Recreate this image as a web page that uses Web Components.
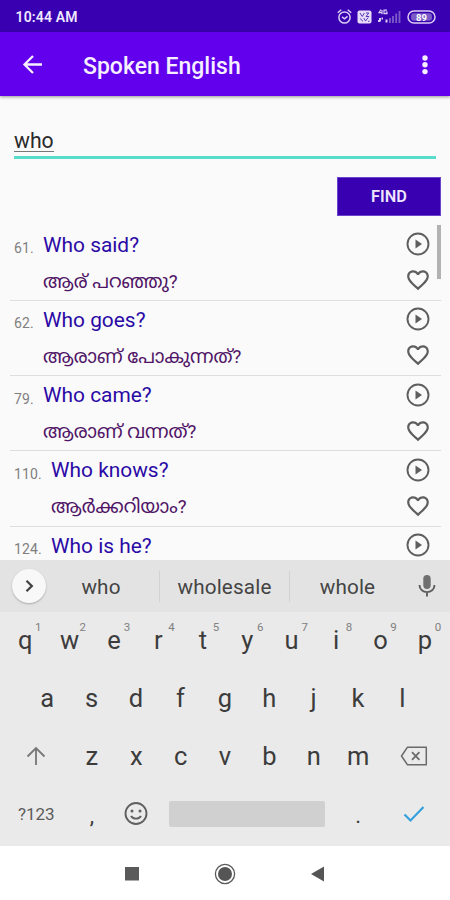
<!DOCTYPE html>
<html lang="en">
<head>
<meta charset="utf-8">
<title>Spoken English</title>
<style>
html,body{margin:0;padding:0;background:#fff}
body{width:450px;height:900px;overflow:hidden;font-family:Roboto,"Noto Sans Malayalam","Noto Sans",sans-serif}
</style>
</head>
<body>
<phone-screen></phone-screen>
<script>
function define(name, html){
  customElements.define(name, class extends HTMLElement{
    constructor(){
      super();
      const t=document.createElement('template');
      t.innerHTML=typeof html==='function'?html(this):html;
      this.attachShadow({mode:'open'}).appendChild(t.content.cloneNode(true));
    }
  });
}

define('status-bar', `<style>
:host{display:flex;height:32px;background:#3900b1;color:#efe8ff;align-items:center;justify-content:space-between;box-sizing:border-box;padding:1px 14px 0 15.500px}
.t{font-size:14px;font-weight:600;letter-spacing:.15px}
.i{display:flex;align-items:center}
svg{display:block}
</style>
<span class="t">10:44 AM</span>
<div class="i">
<svg width="100" height="18" viewBox="336 8 100 18" fill="none" stroke="#d9ccf5" stroke-width="1.5">
<circle cx="344.500" cy="17.500" r="5.600"/><path d="M337.800 12.800l3.500-3M351.200 12.800l-3.500-3M342 16.800l2.500 2 3-2.500"/>
<rect x="357.500" y="10.500" width="14" height="13" rx="2" fill="#e6dcfa" stroke="none"/>
<path d="M360 13l2.200 3.500 2.200-3.500M366 13h2.800l-2.800 3.500h3.200M360 18.500l3 2.800M363.800 18l1.700 3 2.700-3.500M368 21.300h1.500" stroke="#5a36b8" stroke-width="1"/>
<path d="M381 9.500l-2 3.200h3.500M382 10v4.200M387 10.200h-3v3.500h3v-1.700h-1.500" stroke-width="1.200"/>
<path d="M380 18v3.500M378 21h2M381.500 18.500h1.500M386.500 19.500v3" stroke-width="2"/>
<path d="M390 18v5M393 16v7M396.200 13.500v9.500M399.500 11v12" stroke="#7d5cc9" stroke-width="1.800"/>
<rect x="408" y="11" width="27" height="12" rx="6" stroke-width="1.500"/>
<rect x="411" y="13.200" width="21" height="7.600" rx="3" fill="#7a5bc8" stroke="none"/>
<text x="421.500" y="20.500" text-anchor="middle" font-family="Roboto,sans-serif" font-size="9.500" font-weight="700" fill="#fff" stroke="none">89</text>
</svg></div>`);

define('app-bar', `<style>
:host{display:flex;height:64px;background:#6200ee;color:#f5efff;align-items:center;box-sizing:border-box;padding:1px 20px 0 20px;box-shadow:0 1px 3px rgba(0,0,0,.4);position:relative;z-index:1}
h1{margin:0 0 0 37px;font-size:23px;font-weight:500;flex:1;line-height:28px;padding-top:5px;white-space:nowrap}
svg{display:block}
</style>
<svg width="26" height="26" viewBox="0 0 26 26" fill="none" stroke="currentColor" stroke-width="2.300"><path d="M22 12.500H4.500M13 4L4.500 12.500 13 21"/></svg>
<h1><slot></slot></h1>
<svg width="10" height="24" viewBox="0 0 10 24" fill="currentColor"><circle cx="5" cy="5" r="2.700"/><circle cx="5" cy="11.800" r="2.700"/><circle cx="5" cy="18.600" r="2.700"/></svg>`);

define('search-form', `<style>
:host{display:block;height:129px;box-sizing:border-box;padding:32px 9px 0 14px}
.f{height:31px;margin-right:5px;border-bottom:3px solid #58dccb;font-size:21.200px;line-height:26px;color:#2a2a2a;box-sizing:border-box}
.f span{border-bottom:1px solid #777;display:inline-block;line-height:22px;height:22px;box-sizing:border-box}
.b{display:flex;justify-content:flex-end;padding-top:18px}
button{all:unset;box-sizing:border-box;width:104px;height:39px;background:#3900b1;color:#eee6ff;border:1px solid #6a45cc;font:600 16.300px Roboto,sans-serif;text-align:center}
</style>
<div class="f"><span>who</span></div>
<div class="b"><button>FIND</button></div>`);

define('phrase-item', `<style>
:host{display:flex;height:75.300px;box-sizing:border-box;border-bottom:1.500px solid #dedede;margin:0 9px 0 10px;padding:0 10px 0 4px}
.n{font-size:14px;color:#7f7f7f;padding-top:14.500px;line-height:17px;letter-spacing:.1px;width:var(--nw,29px);white-space:nowrap}
.x{flex:1}
.e{font-size:20.900px;line-height:26px;padding-top:6px;color:#2b0aa6;white-space:nowrap}
.m{font-size:18.700px;line-height:24px;padding-top:12px;color:#4f1466;white-space:nowrap}
.a{display:flex;flex-direction:column;align-items:center;width:26px;padding-top:5.500px;gap:10px}
svg{display:block;flex:none}
</style>
<div class="n"><slot name="no"></slot></div>
<div class="x"><div class="e"><slot></slot></div><div class="m"><slot name="ml"></slot></div></div>
<div class="a">
<svg width="26" height="26" viewBox="0 0 26 26" fill="none" stroke="#5e5e5e" stroke-width="1.900"><circle cx="13" cy="13" r="10.500"/><path d="M10.500 8.500v9l6.500-4.500z" fill="#5e5e5e" stroke="none"/></svg>
<svg width="26" height="26" viewBox="0 0 24 24" fill="#5e5e5e"><path d="M16.500 3c-1.740 0-3.410.81-4.500 2.090C10.910 3.810 9.240 3 7.500 3 4.420 3 2 5.420 2 8.500c0 3.780 3.400 6.860 8.550 11.540L12 21.350l1.450-1.320C18.600 15.360 22 12.280 22 8.500 22 5.420 19.580 3 16.500 3zm-4.400 15.550l-.1.100-.1-.1C7.140 14.240 4 11.390 4 8.500 4 6.500 5.500 5 7.500 5c1.540 0 3.040.990 3.570 2.360h1.870C13.460 5.990 14.960 5 16.500 5c2 0 3.500 1.500 3.500 3.500 0 2.890-3.140 5.740-7.900 10.050z"/></svg>
</div>`);

define('phrase-list', `<style>
:host{display:block;height:335px;overflow:hidden;position:relative;box-sizing:border-box;padding-top:.600px}
.s{position:absolute;right:9px;top:0;width:4.500px;height:54px;background:#b2b2b2}
</style><slot></slot><div class="s"></div>`);

define('suggestion-bar', `<style>
:host{display:flex;height:52px;background:#e3e3e3;align-items:center;color:#444;font-size:20.700px;letter-spacing:.15px;box-sizing:border-box;padding:0 12px}
.c{width:34px;height:34px;border-radius:50%;background:#f8f8f8;box-shadow:0 1px 2px rgba(0,0,0,.25);display:grid;place-items:center;margin-right:-3px}
.w{text-align:center;border-right:1px solid #d2d2d2;height:31px;line-height:32px;box-sizing:border-box;white-space:nowrap}
.w.l{border:0}
svg{display:block}
</style>
<div class="c"><svg width="16" height="16" viewBox="0 0 16 16" fill="none" stroke="#444" stroke-width="2.300"><path d="M5.500 2.800L10.800 8l-5.300 5.200"/></svg></div>
<div class="w" style="width:117px">who</div><div class="w" style="width:130px">wholesale</div><div class="w l" style="width:115px">whole</div>
<svg style="margin-left:11px" width="22" height="26" viewBox="0 0 22 26" fill="none" stroke="#5e5e5e" stroke-width="1.900"><rect x="7.300" y="2" width="7.400" height="14" rx="3.700" fill="#707070" stroke="none"/><path d="M3.500 12c0 9.500 15 9.500 15 0M11 18.500v5"/></svg>`);

define('key-cap', el=>`<style>
:host{display:flex;width:44.420px;align-items:center;justify-content:center;position:relative;font-size:25.500px;color:#3c3c3c;flex:none}
sup{position:absolute;left:32px;top:9px;font-size:11.500px;line-height:13px;color:#808080}
</style><slot></slot>${el.getAttribute('hint')?`<sup>${el.getAttribute('hint')}</sup>`:''}`);

define('soft-keyboard', `<style>
:host{display:block;height:234px;background:#eaeaea}
.r{display:flex;height:58px;padding:0 3px}
.r.up{padding-bottom:2px;height:56px}
.r.two{padding-left:25px}
.r.four{height:56px}
.wide{width:66.600px}
.sym{font-size:17px;color:#5c5c5c}
.sp{width:156px;height:26px;background:#d0d0d0;border-radius:2px;align-self:center;margin:0 11px 0 10.500px}
.p{padding-top:2px;box-sizing:border-box;font-size:22px}
svg{display:block}
</style>
<div class="r up">${[...'qwertyuiop'].map((c,i)=>`<key-cap hint="${(i+1)%10}">${c}</key-cap>`).join('')}</div>
<div class="r up two">${[...'asdfghjkl'].map(c=>`<key-cap>${c}</key-cap>`).join('')}</div>
<div class="r up"><key-cap class="wide"><svg width="22" height="22" viewBox="0 0 22 22" fill="none" stroke="#777" stroke-width="1.800"><path d="M11 20V3M2.500 11.500L11 3l8.500 8.500"/></svg></key-cap>${[...'zxcvbnm'].map(c=>`<key-cap>${c}</key-cap>`).join('')}<key-cap class="wide"><svg width="28" height="20" viewBox="0 0 28 20" fill="none" stroke="#6a6a6a" stroke-width="1.500"><path d="M7.500 1.200H26.300V18.800H7.500L1.500 10z" stroke-linejoin="round"/><path d="M12 6.200l7.400 7.600M19.400 6.200L12 13.800" stroke-width="1.800"/></svg></key-cap></div>
<div class="r four"><key-cap class="wide sym">?123</key-cap><key-cap class="p">,</key-cap><key-cap><svg width="26" height="26" viewBox="0 0 26 26" fill="none" stroke="#606060" stroke-width="1.900"><circle cx="13" cy="12.500" r="10.500"/><circle cx="9" cy="10" r="1.500" fill="#606060" stroke="none"/><circle cx="17" cy="10" r="1.500" fill="#606060" stroke="none"/><path d="M8 15c2 3.500 8 3.500 10 0"/></svg></key-cap><div class="sp"></div><key-cap class="p">.</key-cap><key-cap class="wide"><svg width="24" height="20" viewBox="0 0 24 20" fill="none" stroke="#36a0dc" stroke-width="2.200"><path d="M2.500 10.500l6 6L21.500 3"/></svg></key-cap></div>`);

define('nav-bar', `<style>
:host{display:flex;height:54px;background:#fff;justify-content:center;align-items:center;gap:75px;box-sizing:border-box;padding-top:1px}
svg{display:block}
</style>
<svg width="14" height="14" viewBox="0 0 14 14"><rect width="14" height="13.500" fill="#5a5a5a"/></svg>
<svg width="22" height="22" viewBox="0 0 22 22"><circle cx="11" cy="11" r="9.600" fill="none" stroke="#5a5a5a" stroke-width="1.300"/><circle cx="11" cy="11" r="7" fill="#555"/></svg>
<svg width="14" height="16" viewBox="0 0 14 16"><path d="M13 .500v15L0 8z" fill="#555"/></svg>`);

define('phone-screen', `<style>
:host{display:flex;flex-direction:column;width:450px;height:900px;background:#fafafa}
</style>
<status-bar></status-bar>
<app-bar>Spoken English</app-bar>
<search-form></search-form>
<phrase-list>
${[['61.','Who said?','ആര് പറഞ്ഞു?'],['62.','Who goes?','ആരാണ് പോകുന്നത്?'],['79.','Who came?','ആരാണ് വന്നത്?'],['110.','Who knows?','ആർക്കറിയാം?',37],['124.','Who is he?','',37]].map(([n,e,m,w])=>`<phrase-item style="--nw:${w||29}px"><span slot="no">${n}</span>${e}<span slot="ml" lang="ml">${m}</span></phrase-item>`).join('')}
</phrase-list>
<suggestion-bar></suggestion-bar>
<soft-keyboard></soft-keyboard>
<nav-bar></nav-bar>`);
</script>
</body>
</html>
